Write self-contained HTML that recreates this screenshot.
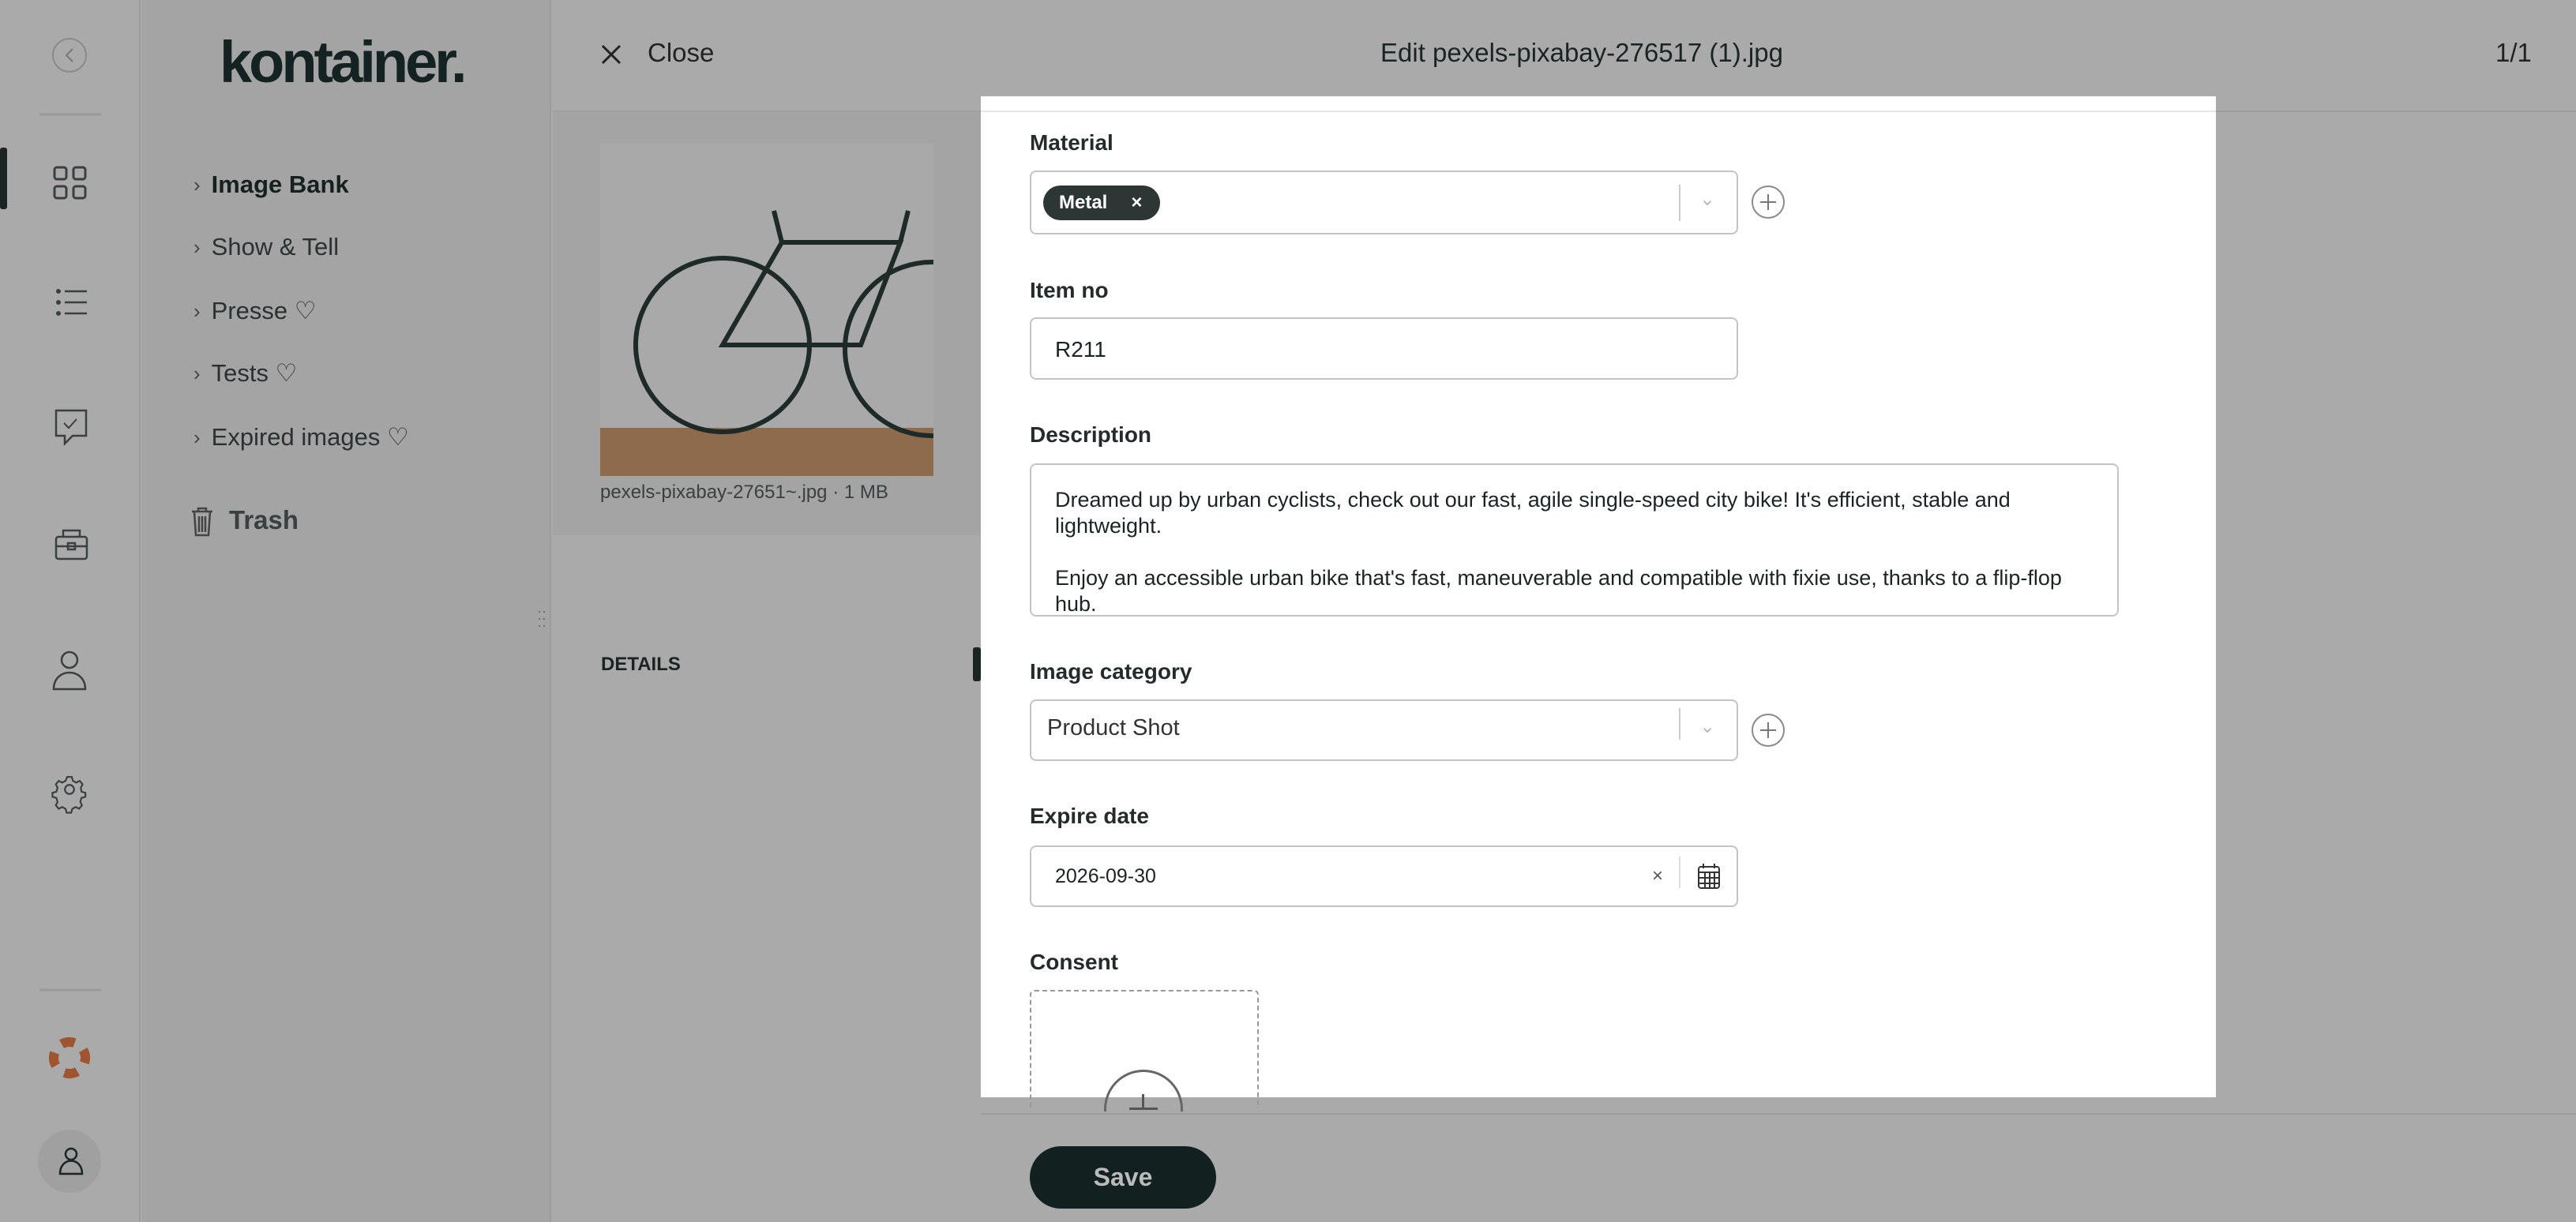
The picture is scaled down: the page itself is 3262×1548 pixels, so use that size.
<!DOCTYPE html>
<html><head><meta charset="utf-8"><style>
*{box-sizing:border-box;margin:0;padding:0}
body{width:3262px;height:1548px;background:#aaaaaa;font-family:"Liberation Sans",sans-serif;color:#1b2323;position:relative;overflow:hidden}
.a{position:absolute}
.rail{left:0;top:0;width:178px;height:1548px;background:#aaaaaa;border-right:2px solid #9c9c9c}
.side{left:180px;top:0;width:518px;height:1548px;background:#a4a4a4;border-right:2px solid #9c9c9c}
.nav{left:245px;font-size:31px;color:#2b3030;display:flex;align-items:center}
.nav .ch{font-size:26px;margin-right:14px;color:#444;font-weight:normal}
.lbl{left:1304px;font-size:28px;font-weight:bold;color:#252b2b}
.box{left:1304px;width:897px;background:#fff;border:2px solid #c4c4c4;border-radius:8px}
.plus{width:42px;height:42px;border:2px solid #8a8a8a;border-radius:50%}
.plus:before,.plus:after{content:"";position:absolute;background:#777;left:50%;top:50%}
.plus:before{width:20px;height:2px;margin:-1px 0 0 -10px}
.plus:after{width:2px;height:20px;margin:-10px 0 0 -1px}
.sep{width:2px;background:#ccc}
</style></head><body>
<div class="a rail"></div>
<div class="a side"></div>
<svg class="a" style="left:0;top:0" width="178" height="1548" fill="none" stroke="#3a3f3f" stroke-width="3">
<circle cx="88" cy="70" r="21" stroke="#8a8a8a" stroke-width="2"/><path d="M92 62l-8 8 8 8" stroke="#777" stroke-width="2"/>
<line x1="50" y1="145" x2="128" y2="145" stroke="#999"/>
<rect x="0" y="187" width="9" height="78" fill="#1b2323" stroke="none" rx="3"/>
<rect x="69" y="212" width="15" height="15" rx="3"/><rect x="93" y="212" width="15" height="15" rx="3"/><rect x="69" y="236" width="15" height="15" rx="3"/><rect x="93" y="236" width="15" height="15" rx="3"/>
<circle cx="74" cy="369" r="1.5"/><circle cx="74" cy="383" r="1.5"/><circle cx="74" cy="397" r="1.5"/><path d="M82 369h28M82 383h28M82 397h28" stroke-width="2.5"/>
<path d="M71 520h38v32H92l-10 10v-10H71z" stroke-width="2.5"/><path d="M81 536l6 6 10-11" stroke-width="2"/>
<rect x="71" y="680" width="39" height="28" rx="3" stroke-width="2.5"/><path d="M80 680v-8h21v8M71 692h39M86 688h9v8h-9z" stroke-width="2.5"/>
<circle cx="88" cy="836" r="10" stroke-width="2.5"/><path d="M68 873c0-28 40-28 40 0z" stroke-width="2.5"/>
<g transform="translate(88 1000) scale(0.72) translate(-88 -1000)">
<circle cx="88" cy="1000" r="8" stroke-width="3"/><path d="M84 978h8l2 7 6 3 6-3 5 6-3 6 1 7 7 2v7l-7 2-2 7 3 6-5 6-6-3-6 3-2 7h-8l-2-7-6-3-6 3-5-6 3-6-2-7-7-2v-7l7-2 2-7-3-6 5-6 6 3 6-3z" stroke-width="3"/></g>
<line x1="50" y1="1254" x2="128" y2="1254" stroke="#999"/>
<circle cx="88" cy="1340" r="20" stroke="#a0542f" stroke-width="12" stroke-dasharray="17 14.4" transform="rotate(-30 88 1340)"/>
<circle cx="88" cy="1471" r="40" fill="#a0a0a0" stroke="none"/>
<circle cx="90" cy="1462" r="7" stroke="#1b2323" stroke-width="2.5"/><path d="M76 1487c0-22 28-22 28 0z" stroke="#1b2323" stroke-width="2.5"/>
</svg>
<div class="a" style="left:278px;top:36px;font-size:74px;font-weight:bold;letter-spacing:-4px;color:#142222">kontainer.</div>
<div class="a nav" style="top:216px;font-weight:bold;color:#15201f"><span class="ch">›</span>Image Bank</div>
<div class="a nav" style="top:295px"><span class="ch">›</span>Show &amp; Tell</div>
<div class="a nav" style="top:376px"><span class="ch">›</span>Presse ♡</div>
<div class="a nav" style="top:455px"><span class="ch">›</span>Tests ♡</div>
<div class="a nav" style="top:536px"><span class="ch">›</span>Expired images ♡</div>
<svg class="a" style="left:240px;top:642px" width="34" height="38" fill="none" stroke="#444" stroke-width="2.5"><path d="M3 6h26M11 6V2h10v4M6 6l2 30h16l2-30M12 12v20M16 12v20M20 12v20"/></svg>
<div class="a nav" style="top:640px;left:290px;font-size:33px;font-weight:bold;color:#3a3f3f">Trash</div>
<div class="a" style="left:680px;top:770px;color:#666;font-size:18px;line-height:9px">·· <br>·· <br>··</div>
<div class="a" style="left:700px;top:140px;width:2562px;height:2px;background:#9e9e9e"></div>
<svg class="a" style="left:760px;top:55px" width="30" height="30" stroke="#222" stroke-width="3"><path d="M3 3l22 22M25 3L3 25"/></svg>
<div class="a" style="left:820px;top:48px;font-size:33px;color:#222">Close</div>
<div class="a" style="left:1600px;width:806px;top:48px;font-size:33px;text-align:center;color:#1b2323">Edit pexels-pixabay-276517 (1).jpg</div>
<div class="a" style="left:3160px;top:48px;font-size:33px;color:#222">1/1</div>
<div class="a" style="left:700px;top:142px;width:542px;height:536px;background:#a4a4a4"></div>
<svg class="a" style="left:760px;top:182px" width="422" height="421">
<rect width="422" height="421" fill="#a9a9a9"/><rect y="360" width="422" height="61" fill="#8f6b4d"/>
<g fill="none" stroke="#1e2a28" stroke-width="6"><circle cx="155" cy="255" r="110"/><circle cx="420" cy="260" r="110"/></g>
<path d="M155 255L230 125H380L330 255z M230 125l-10-40M380 125l10-40" fill="none" stroke="#1e2a28" stroke-width="6"/>
</svg>
<div class="a" style="left:760px;top:610px;font-size:24px;color:#3a3f3f">pexels-pixabay-27651~.jpg · 1 MB</div>
<div class="a" style="left:761px;top:828px;font-size:24px;font-weight:bold;color:#1b2323">DETAILS</div>
<div class="a" style="left:1232px;top:820px;width:10px;height:43px;background:#1b2323;border-radius:3px"></div>
<div class="a" style="left:1242px;top:1410px;width:2020px;height:2px;background:#9e9e9e"></div>
<div class="a" style="left:1304px;top:1452px;width:236px;height:79px;background:#132020;border-radius:40px;color:#bbb;font-size:32px;font-weight:bold;text-align:center;line-height:79px">Save</div>
<div class="a" style="left:1242px;top:122px;width:1564px;height:1268px;background:#fff;overflow:hidden">
<div class="a" style="left:0;top:18px;width:1564px;height:2px;background:#e6e6e6"></div>
</div>
<div class="a lbl" style="top:165px">Material</div>
<div class="a box" style="top:216px;height:81px"></div>
<div class="a" style="left:1321px;top:235px;width:148px;height:44px;background:#2e3535;border-radius:22px;color:#fff;font-size:24px;font-weight:bold;line-height:44px;padding-left:20px">Metal<span style="margin-left:30px">×</span></div>
<div class="a sep" style="left:2126px;top:234px;height:46px"></div>
<div class="a" style="left:2152px;top:238px;color:#bbb;font-size:24px">⌄</div>
<div class="a plus" style="left:2218px;top:235px"></div>
<div class="a lbl" style="top:352px">Item no</div>
<div class="a box" style="top:402px;height:79px"></div>
<div class="a" style="left:1336px;top:427px;font-size:28px">R211</div>
<div class="a lbl" style="top:535px">Description</div>
<div class="a box" style="top:587px;height:194px;width:1379px"></div>
<div class="a" style="left:1336px;top:617px;font-size:27px;line-height:33px;width:1310px">Dreamed up by urban cyclists, check out our fast, agile single-speed city bike! It's efficient, stable and lightweight.<br><br>Enjoy an accessible urban bike that's fast, maneuverable and compatible with fixie use, thanks to a flip-flop hub.</div>
<div class="a lbl" style="top:835px">Image category</div>
<div class="a box" style="top:886px;height:78px"></div>
<div class="a" style="left:1326px;top:906px;font-size:29px;color:#333">Product Shot</div>
<div class="a sep" style="left:2126px;top:897px;height:40px"></div>
<div class="a" style="left:2152px;top:906px;color:#bbb;font-size:24px">⌄</div>
<div class="a plus" style="left:2218px;top:904px"></div>
<div class="a lbl" style="top:1018px">Expire date</div>
<div class="a box" style="top:1071px;height:78px"></div>
<div class="a" style="left:1336px;top:1096px;font-size:25px">2026-09-30</div>
<div class="a" style="left:2092px;top:1096px;font-size:24px;color:#555">×</div>
<div class="a sep" style="left:2126px;top:1085px;height:40px;background:#ddd"></div>
<svg class="a" style="left:2148px;top:1092px" width="32" height="36" fill="none" stroke="#333" stroke-width="2"><rect x="3" y="6" width="26" height="27" rx="3"/><path d="M3 13h26M3 20h26M3 27h26M11 13v20M17 13v20M23 13v20M9 2v6M23 2v6"/></svg>
<div class="a lbl" style="top:1203px">Consent</div>
<div class="a" style="left:1304px;top:1254px;width:290px;height:150px;border:2px dashed #999;border-top-left-radius:6px;border-top-right-radius:6px;border-bottom:none"></div>
<div class="a" style="left:1398px;top:1355px;width:100px;height:100px;border:3px solid #666;border-radius:50%;clip-path:inset(0 0 47% 0)"></div>
<div class="a" style="left:1430px;top:1403px;width:36px;height:3px;background:#555"></div>
<div class="a" style="left:1446px;top:1386px;width:3px;height:20px;background:#555"></div>
</body></html>
